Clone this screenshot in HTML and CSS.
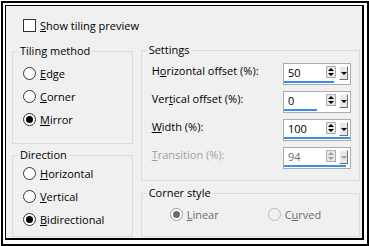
FILE: index.html
```html
<!DOCTYPE html>
<html lang="en">
<head>
	<meta charset="UTF-8">
	<title>Seamless Tiling</title>
	<link rel="stylesheet" href="styles.css">
</head>
<body>
	<div class="frame">
		<div class="dlg">
			<div class="check"><span class="box"></span><span><u>S</u>how tiling preview</span></div>
			<div class="cols">
				<div class="col left">
					<fieldset class="grp tiling">
						<legend>Tiling method</legend>
						<div class="body">
							<div class="radio"><span class="dot"></span><span><u>E</u>dge</span></div>
							<div class="radio"><span class="dot"></span><span><u>C</u>orner</span></div>
							<div class="radio on"><span class="dot"></span><span><u>M</u>irror</span></div>
						</div>
					</fieldset>
					<fieldset class="grp direction">
						<legend>Direction</legend>
						<div class="body">
							<div class="radio"><span class="dot"></span><span><u>H</u>orizontal</span></div>
							<div class="radio"><span class="dot"></span><span><u>V</u>ertical</span></div>
							<div class="radio on"><span class="dot"></span><span><u>B</u>idirectional</span></div>
						</div>
					</fieldset>
				</div>
				<div class="col right">
					<fieldset class="grp settings">
						<legend>Settings</legend>
						<div class="body">
							<div class="row">
								<span class="lbl">H<u>o</u>rizontal offset (%):</span>
								<div class="spin">
									<div class="spin-top"><span class="val">50</span><span class="arrows"><i class="up"></i><i class="down"></i></span><span class="drop"><i></i></span></div>
									<div class="bar" style="width:75%"></div>
								</div>
							</div>
							<div class="row">
								<span class="lbl">Ver<u>t</u>ical offset (%):</span>
								<div class="spin">
									<div class="spin-top"><span class="val">0</span><span class="arrows"><i class="up"></i><i class="down"></i></span><span class="drop"><i></i></span></div>
									<div class="bar" style="width:50%"></div>
								</div>
							</div>
							<div class="row">
								<span class="lbl"><u>W</u>idth (%):</span>
								<div class="spin">
									<div class="spin-top"><span class="val">100</span><span class="arrows"><i class="up"></i><i class="down"></i></span><span class="drop"><i></i></span></div>
									<div class="bar" style="width:100%"></div>
								</div>
							</div>
							<div class="row off">
								<span class="lbl"><u>T</u>ransition (%):</span>
								<div class="spin">
									<div class="spin-top"><span class="val">94</span><span class="arrows"><i class="up"></i><i class="down"></i></span><span class="drop"><i></i></span></div>
									<div class="bar" style="width:94%"></div>
								</div>
							</div>
						</div>
					</fieldset>
					<fieldset class="grp corner">
						<legend>Corner style</legend>
						<div class="body">
							<div class="radio on off linear"><span class="dot"></span><span><u>L</u>inear</span></div>
							<div class="radio off"><span class="dot"></span><span>C<u>u</u>rved</span></div>
						</div>
					</fieldset>
				</div>
			</div>
		</div>
	</div>
</body>
</html>
```
FILE: styles.css
```css
* {
	margin: 0;
	padding: 0;
	box-sizing: border-box;
}
body {
	background: #fff;
	font-family: "Open Sans", "Noto Sans", sans-serif;
	font-size: 11px;
	color: #000;
}
u {
	text-decoration: underline;
	text-underline-offset: 1px;
}
.frame {
	width: 368px;
	height: 245px;
	margin: 1px 0 0 1px;
	border: 2px solid #000;
	padding: 2px 2px 4px 2px;
}
.dlg {
	width: 359px;
	height: 235px;
	background: #f0f0f0;
	border: solid #000;
	border-width: 1px 2px 2px 1px;
	padding: 0 2px 0 6px;
	overflow: hidden;
}
.check {
	display: flex;
	align-items: center;
	height: 13px;
	margin: 13px 0 0 11px;
	gap: 4px;
	line-height: 14px;
}
.check .box {
	width: 13px;
	height: 13px;
	border: 1px solid #333;
	background: #fff;
}
.cols {
	display: flex;
	gap: 8px;
	margin-top: 11px;
}
.col {
	display: flex;
	flex-direction: column;
}
.left {
	width: 121px;
	padding-top: 1px;
}
.right {
	width: 220px;
}
.grp {
	border: 1px solid #dcdcdc;
	min-width: 0;
}
.grp legend {
	margin-left: 5px;
	padding: 0 2px;
	line-height: 14px;
	height: 14px;
}
.tiling {
	height: 100px;
}
.tiling .body {
	padding: 4px 0 0 10px;
}
.direction {
	height: 89px;
	margin-top: 4px;
}
.direction .body {
	padding-left: 10px;
}
.settings {
	height: 138px;
}
.settings .body {
	padding: 6px 8px 0 10px;
	display: flex;
	flex-direction: column;
	gap: 6px;
}
.corner {
	height: 51px;
	margin-top: 5px;
}
.corner .body {
	display: flex;
	padding: 3px 0 0 28px;
}
.radio {
	display: flex;
	align-items: center;
	height: 23px;
	gap: 4px;
	line-height: 14px;
}
.radio .dot {
	width: 13px;
	height: 13px;
	border: 1px solid #333;
	border-radius: 50%;
	background: #fff;
	display: flex;
	align-items: center;
	justify-content: center;
}
.radio.on .dot::after {
	content: "";
	width: 7px;
	height: 7px;
	border-radius: 50%;
	background: #000;
}
.radio.off {
	color: #6d6d6d;
}
.radio.off .dot {
	border-color: #bcbcbc;
	background: #f0f0f0;
}
.radio.off.on .dot {
	border-color: #9a9a9a;
	background: #fff;
}
.radio.off.on .dot::after {
	background: #6d6d6d;
}
.linear {
	width: 98px;
}
.row {
	display: flex;
	justify-content: space-between;
	align-items: flex-start;
	height: 22px;
}
.lbl {
	line-height: 16px;
}
.row.off .lbl {
	color: #a0a0a0;
}
.spin {
	width: 68px;
	height: 22px;
	border: 1px solid #acacac;
	background: #fff;
	padding-top: 1px;
	display: flex;
	flex-direction: column;
}
.spin-top {
	display: flex;
	height: 15px;
}
.val {
	flex: 1;
	padding-left: 4px;
	line-height: 15px;
}
.row.off .val {
	color: #6d6d6d;
}
.arrows {
	width: 10px;
	height: 12px;
	margin: 1px 3px 0 0;
	border: 1px solid #adadad;
	background: #e8e8e8;
	display: flex;
	flex-direction: column;
	align-items: center;
	justify-content: space-around;
}
.arrows i {
	width: 0;
	height: 0;
	border-left: 3px solid transparent;
	border-right: 3px solid transparent;
}
.arrows .up {
	border-bottom: 3px solid #000;
}
.arrows .down {
	border-top: 3px solid #000;
}
.drop {
	width: 9px;
	height: 14px;
	margin: 1px 2px 0 0;
	background: #e8e8e8;
	border: 1px solid;
	border-color: #fff #6d6d6d #6d6d6d #fff;
	display: flex;
	align-items: center;
	justify-content: center;
}
.drop i {
	width: 0;
	height: 0;
	border-left: 3px solid transparent;
	border-right: 3px solid transparent;
	border-top: 3px solid #000;
}
.row.off .arrows .up {
	border-bottom-color: #a0a0a0;
}
.row.off .arrows .down, .row.off .drop i {
	border-top-color: #a0a0a0;
}
.bar {
	height: 2px;
	margin-top: 1px;
	background: #3a8ee6;
}
```
